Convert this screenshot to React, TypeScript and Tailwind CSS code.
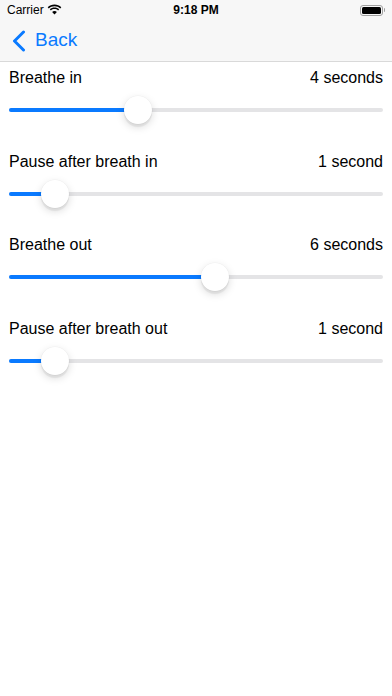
import React from "react";

const rows = [
  { label: "Breathe in", value: "4 seconds", frac: 0.332 },
  { label: "Pause after breath in", value: "1 second", frac: 0.092 },
  { label: "Breathe out", value: "6 seconds", frac: 0.555 },
  { label: "Pause after breath out", value: "1 second", frac: 0.092 },
];

function Slider({ frac }: { frac: number }) {
  const center = `calc(14px + (100% - 28px) * ${frac})`;
  return (
    <div className="relative h-[28px] mx-[9px]">
      <div className="absolute left-0 right-0 top-[12px] h-[4px] rounded-full bg-[#e4e4e6]" />
      <div
        className="absolute left-0 top-[12px] h-[4px] rounded-full bg-[#0a7aff]"
        style={{ width: center }}
      />
      <div
        className="absolute top-0 w-[28px] h-[28px] -ml-[14px] rounded-full bg-white shadow-[0_3px_8px_rgba(0,0,0,0.15),0_3px_1px_rgba(0,0,0,0.06),0_0_0_0.5px_rgba(0,0,0,0.04)]"
        style={{ left: center }}
      />
    </div>
  );
}

export default function App() {
  return (
    <div
      className="w-[392px] h-[696px] bg-white text-black overflow-hidden"
      style={{ fontFamily: '"Liberation Sans", Arial, sans-serif' }}
    >
      <div className="bg-[#f7f7f7] border-b border-[#d9d9d9]">
        <div className="h-[20px] flex items-center justify-between px-[7px] relative">
          <div className="flex items-center gap-[3px] text-[12px]">
            <span>Carrier</span>
            <svg width="15" height="11" viewBox="0 0 15 11" className="mt-[-1px]">
              <path d="M7.5 2.2c2.2 0 4.2.85 5.7 2.25l1.1-1.15C12.5 1.6 10.1.6 7.5.6S2.5 1.6.7 3.3l1.1 1.15C3.3 3.05 5.3 2.2 7.5 2.2z" fill="#000" />
              <path d="M7.5 5.1c1.4 0 2.6.5 3.6 1.35l1.1-1.15C10.9 4.15 9.3 3.5 7.5 3.5s-3.4.65-4.7 1.8l1.1 1.15C4.9 5.6 6.1 5.1 7.5 5.1z" fill="#000" />
              <path d="M7.5 10.5 9.9 8c-.65-.55-1.5-.9-2.4-.9s-1.75.35-2.4.9z" fill="#000" />
            </svg>
          </div>
          <span className="absolute left-1/2 -translate-x-1/2 text-[12px] font-semibold">9:18 PM</span>
          <div className="flex items-center mr-[0px]">
            <div className="w-[23px] h-[11px] rounded-[3px] border border-[#a0a0a0] p-[1px]">
              <div className="w-full h-full rounded-[1.5px] bg-black" />
            </div>
            <div className="w-[1.5px] h-[4px] bg-[#a0a0a0] rounded-r-[1px] ml-[1px]" />
          </div>
        </div>
        <div className="h-[41px] flex items-center pl-[12px]">
          <svg width="14" height="22" viewBox="0 0 14 22" className="mt-[1px]">
            <path d="M11.5 2 L2.5 11 L11.5 20" fill="none" stroke="#0a7aff" strokeWidth="3" strokeLinecap="round" strokeLinejoin="round" />
          </svg>
          <span className="ml-[9px] text-[19px] text-[#0a7aff]">Back</span>
        </div>
      </div>
      <div className="pt-[6px]">
        {rows.map((r) => (
          <div key={r.label} className="h-[83.5px]">
            <div className="h-[20px] flex items-center justify-between px-[9px] text-[16px]">
              <span>{r.label}</span>
              <span>{r.value}</span>
            </div>
            <div className="mt-[8px]">
              <Slider frac={r.frac} />
            </div>
          </div>
        ))}
      </div>
    </div>
  );
}
